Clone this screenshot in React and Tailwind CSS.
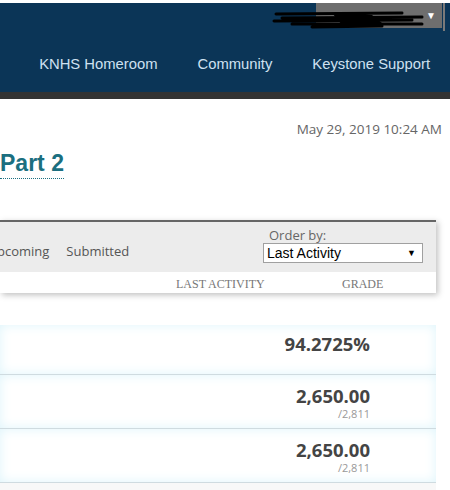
export default function App() {
  const rows = [
    { big: "94.2725%", small: null, h: "h-[50px]" },
    { big: "2,650.00", small: "/2,811", h: "h-[54px]" },
    { big: "2,650.00", small: "/2,811", h: "h-[54px]" },
  ];
  return (
    <div className="w-[450px] h-[490px] overflow-hidden bg-white relative" style={{ fontFamily: '"Liberation Sans", Arial, sans-serif' }}>
      {/* top white strip */}
      <div className="h-[3px] bg-white" />
      {/* navy header */}
      <div className="h-[89px] bg-[#0b3557] relative">
        <div className="absolute left-[316px] top-0 w-[126px] h-[25px] bg-[#6e6e6e] flex items-center justify-end pr-[6px]">
          <span className="text-white text-[10px] leading-none">▼</span>
        </div>
        <div className="absolute left-[443px] top-0 w-[2px] h-[28px] bg-[#7a7a7a]" />
        {/* redaction scribble */}
        <svg className="absolute left-[272px] top-[6px]" width="160" height="22" viewBox="0 0 160 22">
          <path d="M4 5 L130 4 M10 9 L150 8 M2 12 L140 11 M20 15 L150 15 M40 18 L110 17" stroke="#000" strokeWidth="3" strokeLinecap="round" fill="none" />
          <path d="M60 4 Q80 2 100 6 L110 14 Q90 20 70 16 Z" fill="#000" />
        </svg>
        <nav className="absolute right-[20px] top-[50px] flex gap-[40px] text-[14.8px] text-[#cfe1f1]">
          <span>KNHS Homeroom</span>
          <span>Community</span>
          <span>Keystone Support</span>
        </nav>
      </div>
      <div className="h-[7px] bg-[#333333]" />

      <div className="flex justify-end pr-[8px] pt-[20px] text-[13.5px] text-[#666]" style={{ fontFamily: '"Open Sans", sans-serif' }}>
        May 29, 2019 10:24 AM
      </div>
      <div className="mt-[13px] leading-none">
        <span className="text-[23px] font-bold text-[#1b6f80] border-b border-dotted border-[#1b6f80] pb-[3px] inline-block">Part 2</span>
      </div>

      {/* toolbar card */}
      <div className="mt-[41px] w-[436px] shadow-[2px_2px_6px_rgba(0,0,0,0.25)]">
        <div className="h-[2px] bg-[#666]" />
        <div className="h-[50px] bg-[#ececec] flex items-center relative overflow-hidden">
          <div className="flex gap-[17px] text-[13px] text-[#555] ml-[-3px] mt-[8px]" style={{ fontFamily: '"Open Sans", sans-serif' }}>
            <span>pcoming</span>
            <span>Submitted</span>
          </div>
          <div className="absolute left-[263px] top-[5px] flex flex-col">
            <span className="text-[13px] text-[#666] ml-[6px] leading-[16px]" style={{ fontFamily: '"Open Sans", sans-serif' }}>Order by:</span>
            <div className="w-[160px] h-[20px] bg-white border border-[#a0a0a0] flex items-center justify-between px-[3px]">
              <span className="text-[14px] text-black">Last Activity</span>
              <span className="text-[9px] text-black mr-[3px]">▼</span>
            </div>
          </div>
        </div>
        <div className="h-[21px] bg-white relative text-[12px] text-[#777]" style={{ fontFamily: '"Liberation Serif", serif' }}>
          <span className="absolute left-[176px] top-[3px]">LAST ACTIVITY</span>
          <span className="absolute left-[342px] top-[3px]">GRADE</span>
        </div>
      </div>

      {/* rows */}
      <div className="mt-[32px] w-[436px] flex flex-col" style={{ fontFamily: '"Open Sans", sans-serif' }}>
        {rows.map((r, i) => (
          <div key={i} className={`${r.h} border-b border-[#cfdbe0] shadow-[inset_0_0_12px_#dff5fb] bg-white flex flex-col items-end pr-[66px] justify-start`}>
            <span className={`text-[18.5px] font-bold text-[#444] leading-[22px] ${r.small ? "mt-[10px]" : "mt-[8px]"}`}>{r.big}</span>
            {r.small && <span className="text-[11px] text-[#999] leading-[14px]">{r.small}</span>}
          </div>
        ))}
        <div className="h-[10px] bg-[#f8f8f8]" />
      </div>
    </div>
  );
}
